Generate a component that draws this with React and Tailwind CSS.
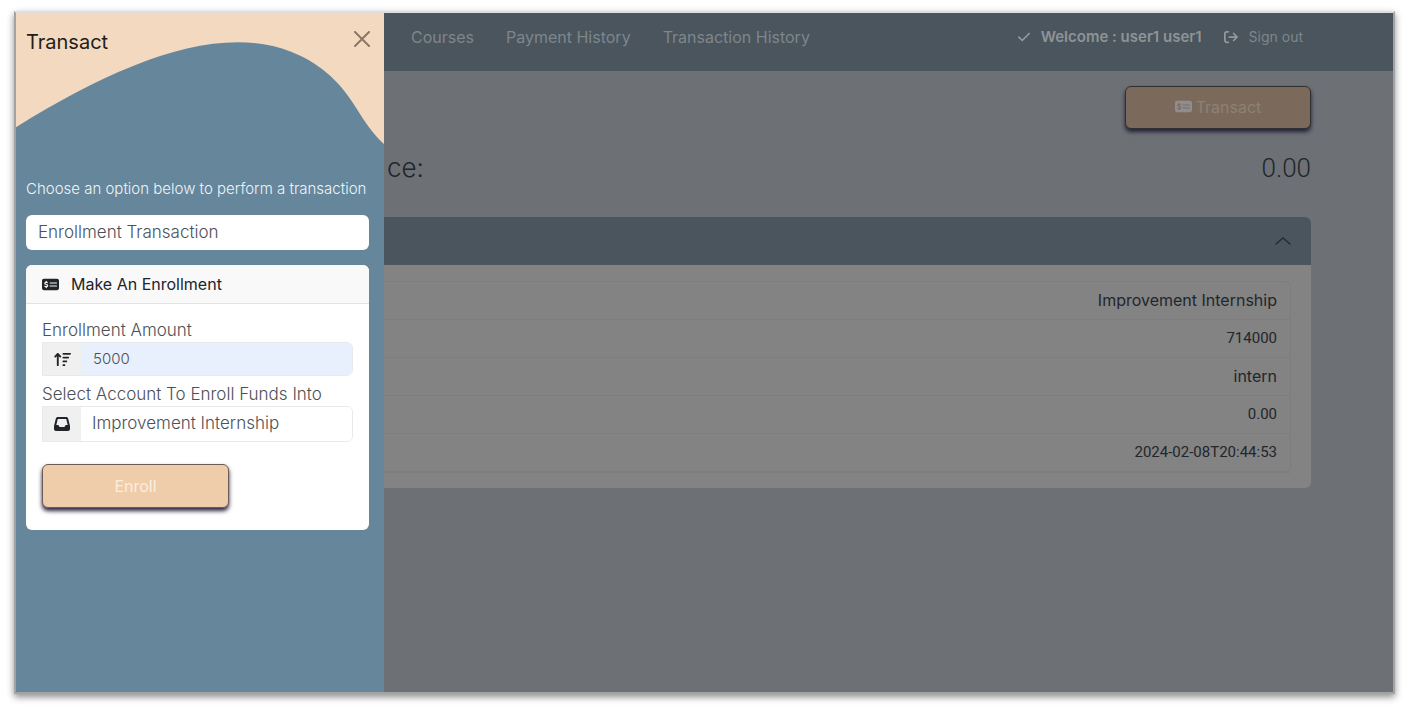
import {
  FaArrowRightFromBracket,
  FaArrowUpWideShort,
  FaCheck,
  FaInbox,
  FaMoneyCheckDollar,
} from "react-icons/fa6";

const navLinks = ["Courses", "Payment History", "Transaction History"];

const accountDetails = [
  { value: "Improvement Internship" },
  { value: "714000", numeric: true },
  { value: "intern" },
  { value: "0.00", numeric: true },
  { value: "2024-02-08T20:44:53", numeric: true },
];

const TransactDrawer = () => {
  return (
    <aside className="relative w-[368px] shrink-0 bg-[#66869b] px-2.5">
      {/* Header wave */}
      <svg
        className="absolute top-0 left-0 w-full h-[131px]"
        viewBox="0 0 368 132"
        preserveAspectRatio="none"
        aria-hidden="true"
      >
        <path
          d="M0 0H368V132C357 122 349 110 341 97C323 66 300 49 275 39C201 10 103 51 0 115Z"
          fill="#f3d9bf"
        />
      </svg>

      <div className="relative flex items-start justify-between h-[166px] pt-[15px] pr-1">
        <h2 className="text-xl leading-7 text-[#221d1a]">Transact</h2>
        <button type="button" aria-label="Close" className="mt-[3px] text-[#8a7767]">
          <svg className="size-4" viewBox="0 0 16 16" stroke="currentColor" strokeWidth="2" strokeLinecap="round">
            <path d="M1 1L15 15M15 1L1 15" />
          </svg>
        </button>
      </div>

      <label
        htmlFor="transactType"
        className="block text-[15px] leading-5 font-light whitespace-nowrap text-[#eef4f8]"
      >
        Choose an option below to perform a transaction
      </label>
      <select
        id="transactType"
        className="block appearance-none w-[343px] h-[35px] mt-4 px-3 rounded-md bg-white text-[17px] font-light text-[#4c5157]"
      >
        <option>Enrollment Transaction</option>
      </select>

      <form className="w-[343px] mt-[15px] rounded-md bg-white overflow-hidden">
        <div className="flex items-center gap-3 h-[39px] px-4 border-b border-[#e3e3e3] bg-[#f9f9f9] text-[#212529]">
          <FaMoneyCheckDollar className="size-[17px]" />
          <h3 className="text-base">Make An Enrollment</h3>
        </div>
        <div className="px-4 pt-[14px] pb-[22px] text-[17px] font-light text-[#4c5157]">
          <label htmlFor="amount" className="block leading-6">
            Enrollment Amount
          </label>
          <div className="flex h-[34px] rounded-r-md border border-[#e6e9ee] overflow-hidden">
            <span className="flex items-center justify-center w-[38px] bg-[#f0f0f0] text-[#212529]">
              <FaArrowUpWideShort />
            </span>
            <input
              id="amount"
              type="text"
              defaultValue="5000"
              className="flex-1 min-w-0 px-3 bg-[#e8f0fe] text-[15px]"
            />
          </div>
          <label htmlFor="account" className="block mt-[6px] leading-6">
            Select Account To Enroll Funds Into
          </label>
          <div className="flex h-[36px] rounded-r-md border border-[#e9e9e9] overflow-hidden">
            <span className="flex items-center justify-center w-[38px] bg-[#f0f0f0] text-base text-[#212529]">
              <FaInbox />
            </span>
            <select id="account" className="appearance-none flex-1 min-w-0 px-[11px] bg-white">
              <option>Improvement Internship</option>
            </select>
          </div>
          <button
            type="button"
            className="block w-[187px] h-[44px] mt-[22px] rounded-md border border-[#6b5a55] bg-[#efcdab] text-base font-normal text-[#fbeedd] shadow-[0_3px_4px_#2b2440]"
          >
            Enroll
          </button>
        </div>
      </form>
    </aside>
  );
};

const Navbar = () => {
  return (
    <nav className="flex items-start justify-between h-[58px] pt-3 pl-[27px] pr-[90px] bg-[#4a555e] text-[#7e868c]">
      <div className="flex gap-8 text-base">
        {navLinks.map((link) => (
          <a key={link} href="#">
            {link}
          </a>
        ))}
      </div>
      <div className="flex items-center h-6">
        <FaCheck className="size-[14px] text-[#94989b]" />
        <span className="ml-2.5 text-[15px] font-semibold text-[#8f9396]">
          Welcome : user1 user1
        </span>
        <a href="#" className="flex items-center gap-[11px] ml-[22px] text-sm">
          <FaArrowRightFromBracket className="size-[14px] text-[#94989b]" />
          Sign out
        </a>
      </div>
    </nav>
  );
};

const Dashboard = () => {
  return (
    <main className="pt-[15px] pr-[82px] text-[#22262a]">
      <div className="flex justify-end">
        <button
          type="button"
          className="flex items-center justify-center gap-1 w-[186px] h-[43px] pb-0.5 rounded-md border border-[#32302f] bg-[#7b6a5b] text-base text-[#8b8175] shadow-[0_3px_4px_#20203a]"
        >
          <FaMoneyCheckDollar className="size-[17px] text-[#8e8e90]" />
          Transact
        </button>
      </div>

      <div className="flex justify-between h-[88px] pt-[19px] pl-[3px] leading-10 font-light">
        <h1 className="text-[26px] leading-10">ce:</h1>
        <span className="font-['Roboto',sans-serif] text-[26px]">0.00</span>
      </div>

      <section className="rounded-r-md overflow-hidden bg-[#838383]">
        <button
          type="button"
          aria-label="Toggle account"
          className="flex items-center justify-end w-full h-12 pr-5 bg-[#4a555e]"
        >
          <svg className="w-4 h-2" viewBox="0 0 16 8" fill="none" stroke="#222d36" strokeWidth="1.5" strokeLinecap="round">
            <path d="M1 7L8 1L15 7" />
          </svg>
        </button>
        <ul className="mt-4 mb-[15px] mr-5 border-t border-r border-[#7d7d7d] rounded-r-md">
          {accountDetails.map(({ value, numeric }) => (
            <li
              key={value}
              className={`h-[38px] pt-[6px] pr-[13px] text-right leading-6 border-b border-[#7d7d7d] last:border-b-0 ${
                numeric ? "font-['Roboto',sans-serif] text-[15px]" : "text-base"
              }`}
            >
              {value}
            </li>
          ))}
          <li className="border-b border-[#7d7d7d]" aria-hidden="true" />
        </ul>
      </section>
    </main>
  );
};

const App = () => {
  return (
    <div className="min-h-screen flex bg-white pt-[11px] px-[14px] pb-[18px] font-['Inter',sans-serif]">
      <div className="flex flex-1 border-2 border-[#a3a3a3] border-t-[#dedede] shadow-[0_3px_7px_#00000073]">
        <TransactDrawer />
        <div className="flex-1 min-w-0 bg-[#6d7075]">
          <Navbar />
          <Dashboard />
        </div>
      </div>
    </div>
  );
};

export default App;
